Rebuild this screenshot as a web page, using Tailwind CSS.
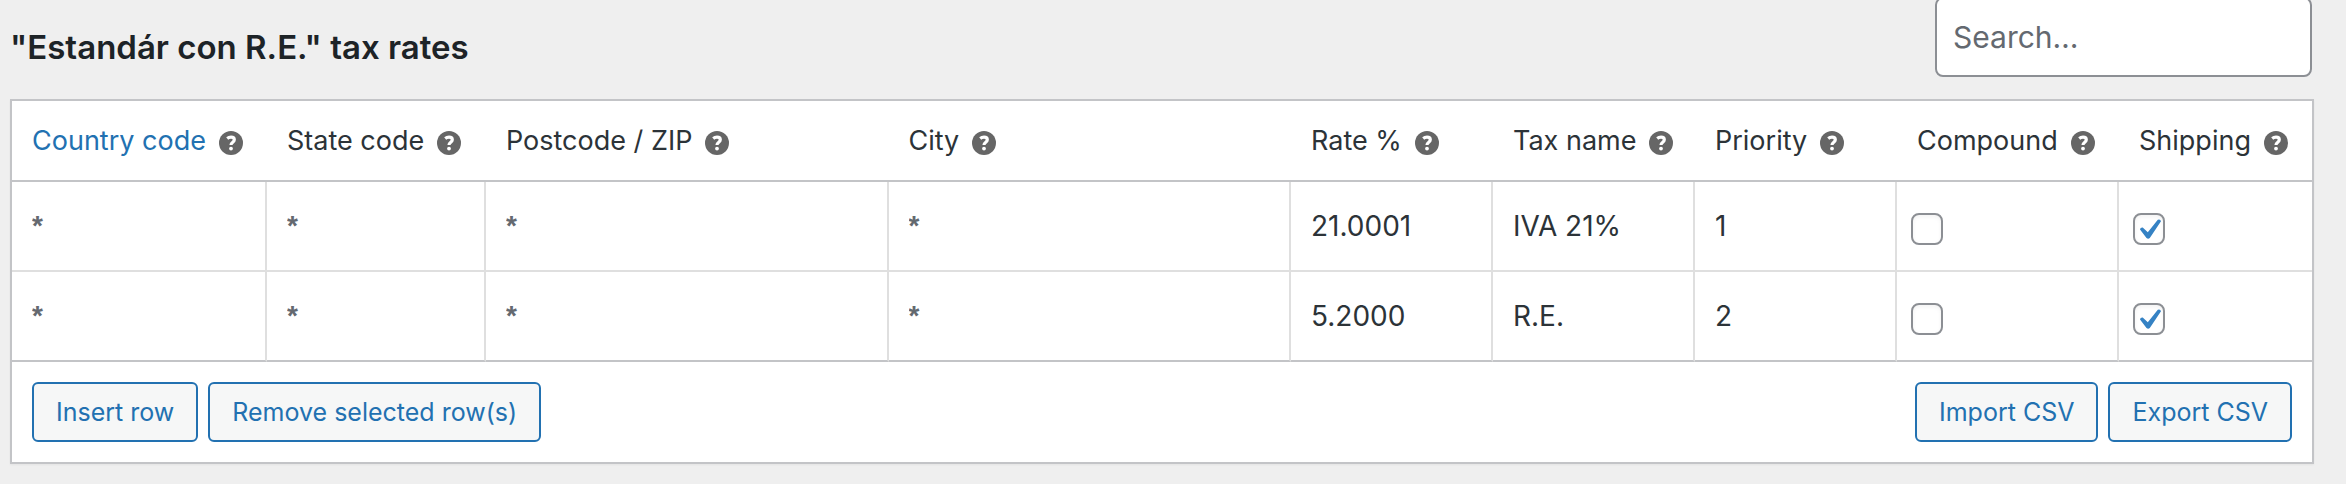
<!DOCTYPE html>
<html lang="en">
<head>
  <meta charset="utf-8"/>
  <meta content="width=device-width, initial-scale=1" name="viewport"/>
  <title>Tax rates</title>
  <script src="https://cdn.jsdelivr.net/npm/@tailwindcss/browser@4"></script>
</head>
<body class="bg-[#efefef] min-h-screen overflow-x-hidden font-['Inter','Liberation_Sans',sans-serif] text-[28px] text-[#2c3338]">
  <!-- shared icons -->
  <svg class="hidden" aria-hidden="true">
    <symbol id="help" viewBox="0 0 24 24">
      <circle cx="12" cy="12" r="12" fill="#666"/>
      <path d="M8.200 7.500C9.300 6.600 10.600 6.200 12 6.200c2.200 0 3.300 1 3.300 2.600 0 2.500-3.300 2.300-3.300 5.200" fill="none" stroke="#fff" stroke-width="3.200"/>
      <circle cx="12" cy="17.600" r="1.900" fill="#fff"/>
    </symbol>
    <symbol id="tick" viewBox="0 0 32 32">
      <path d="M7 16.500Q7.200 14.300 9.700 14.500L14.800 19.300L24.800 6.800Q27.300 5.800 28 8.300L16.800 25Q15.200 26.400 13.500 25Z" fill="#3582c4"/>
    </symbol>
  </svg>

  <main class="pl-[10px] pr-8">
    <header class="flex items-start justify-between h-[99px]">
      <h1 class="pt-[27px] text-[33px] leading-10 font-semibold text-[#1d2327]">"Estandár con R.E." tax rates</h1>
      <input type="search" aria-label="Search" placeholder="Search…" class="-mt-[3px] mr-[2px] w-[377px] h-20 px-4 rounded-lg border-2 border-[#8c8f94] bg-white text-[30px] placeholder:text-[#646970] placeholder:opacity-100"/>
    </header>

    <div class="bg-white border-2 border-[#c3c4c7] shadow-xs">
      <table class="w-full table-fixed border-separate border-spacing-0 text-left">
        <colgroup>
          <col class="w-[255px]"/>
          <col class="w-[219px]"/>
          <col/>
          <col/>
          <col class="w-[202px]"/>
          <col class="w-[202px]"/>
          <col class="w-[202px]"/>
          <col class="w-[222px]"/>
          <col class="w-[193px]"/>
        </colgroup>
        <thead>
          <tr class="h-[81px] text-[27px] *:border-b-2 *:border-[#c3c4c7] *:pl-5 *:pt-[2px] *:font-normal *:whitespace-nowrap">
            <th><div class="flex items-center gap-[13px]"><a href="#" class="text-[#2271b1]">Country code</a><svg class="size-6 mt-[3px]"><use href="#help"/></svg></div></th>
            <th><div class="flex items-center gap-[13px]">State code<svg class="size-6 mt-[3px]"><use href="#help"/></svg></div></th>
            <th><div class="flex items-center gap-[13px]">Postcode / ZIP<svg class="size-6 mt-[3px]"><use href="#help"/></svg></div></th>
            <th><div class="flex items-center gap-[13px]">City<svg class="size-6 mt-[3px]"><use href="#help"/></svg></div></th>
            <th><div class="flex items-center gap-[13px]">Rate %<svg class="size-6 mt-[3px]"><use href="#help"/></svg></div></th>
            <th><div class="flex items-center gap-[13px]">Tax name<svg class="size-6 mt-[3px]"><use href="#help"/></svg></div></th>
            <th><div class="flex items-center gap-[13px]">Priority<svg class="size-6 mt-[3px]"><use href="#help"/></svg></div></th>
            <th><div class="flex items-center gap-[13px]">Compound<svg class="size-6 mt-[3px]"><use href="#help"/></svg></div></th>
            <th><div class="flex items-center gap-[13px]">Shipping<svg class="size-6 mt-[3px]"><use href="#help"/></svg></div></th>
          </tr>
        </thead>
        <tbody>
          <tr class="h-[90px] *:border-b-2 *:border-r-2 *:border-[#dfdfdf] *:last:border-r-0">
            <td><input type="text" aria-label="Country code" placeholder="*" class="block w-full h-[88px] px-5 font-['Liberation_Sans',sans-serif] font-bold placeholder:text-[#646970]"/></td>
            <td><input type="text" aria-label="State code" placeholder="*" class="block w-full h-[88px] px-5 font-['Liberation_Sans',sans-serif] font-bold placeholder:text-[#646970]"/></td>
            <td><input type="text" aria-label="Postcode / ZIP" placeholder="*" class="block w-full h-[88px] px-5 font-['Liberation_Sans',sans-serif] font-bold placeholder:text-[#646970]"/></td>
            <td><input type="text" aria-label="City" placeholder="*" class="block w-full h-[88px] px-5 font-['Liberation_Sans',sans-serif] font-bold placeholder:text-[#646970]"/></td>
            <td><input type="text" aria-label="Rate %" value="21.0001" class="block w-full h-[88px] px-5"/></td>
            <td><input type="text" aria-label="Tax name" value="IVA 21%" class="block w-full h-[88px] px-5"/></td>
            <td><input type="text" aria-label="Priority" value="1" class="block w-full h-[88px] px-5"/></td>
            <td class="pl-[14px] pt-[6px]"><input type="checkbox" aria-label="Compound" class="block appearance-none size-8 rounded-lg border-2 border-[#8c8f94] bg-white inset-shadow-sm"/></td>
            <td class="pl-[14px] pt-[6px]"><div class="grid size-8"><input type="checkbox" checked aria-label="Shipping" class="col-start-1 row-start-1 appearance-none size-8 rounded-lg border-2 border-[#8c8f94] bg-white inset-shadow-sm"/><svg class="col-start-1 row-start-1 size-8 pointer-events-none"><use href="#tick"/></svg></div></td>
          </tr>
          <tr class="h-[90px] *:border-b-2 *:border-b-[#c3c4c7] *:border-r-2 *:border-r-[#dfdfdf] *:last:border-r-0">
            <td><input type="text" aria-label="Country code" placeholder="*" class="block w-full h-[88px] px-5 font-['Liberation_Sans',sans-serif] font-bold placeholder:text-[#646970]"/></td>
            <td><input type="text" aria-label="State code" placeholder="*" class="block w-full h-[88px] px-5 font-['Liberation_Sans',sans-serif] font-bold placeholder:text-[#646970]"/></td>
            <td><input type="text" aria-label="Postcode / ZIP" placeholder="*" class="block w-full h-[88px] px-5 font-['Liberation_Sans',sans-serif] font-bold placeholder:text-[#646970]"/></td>
            <td><input type="text" aria-label="City" placeholder="*" class="block w-full h-[88px] px-5 font-['Liberation_Sans',sans-serif] font-bold placeholder:text-[#646970]"/></td>
            <td><input type="text" aria-label="Rate %" value="5.2000" class="block w-full h-[88px] px-5"/></td>
            <td><input type="text" aria-label="Tax name" value="R.E." class="block w-full h-[88px] px-5"/></td>
            <td><input type="text" aria-label="Priority" value="2" class="block w-full h-[88px] px-5"/></td>
            <td class="pl-[14px] pt-[6px]"><input type="checkbox" aria-label="Compound" class="block appearance-none size-8 rounded-lg border-2 border-[#8c8f94] bg-white inset-shadow-sm"/></td>
            <td class="pl-[14px] pt-[6px]"><div class="grid size-8"><input type="checkbox" checked aria-label="Shipping" class="col-start-1 row-start-1 appearance-none size-8 rounded-lg border-2 border-[#8c8f94] bg-white inset-shadow-sm"/><svg class="col-start-1 row-start-1 size-8 pointer-events-none"><use href="#tick"/></svg></div></td>
          </tr>
        </tbody>
      </table>
      <div class="flex gap-[10px] p-5 text-[25px] text-[#2271b1]">
        <button type="button" class="h-[60px] px-[22px] pt-[2px] rounded-md border-2 border-[#2271b1] bg-[#f6f7f7]">Insert row</button>
        <button type="button" class="h-[60px] px-[22px] pt-[2px] rounded-md border-2 border-[#2271b1] bg-[#f6f7f7]">Remove selected row(s)</button>
        <button type="button" class="h-[60px] px-[22px] pt-[2px] ml-auto rounded-md border-2 border-[#2271b1] bg-[#f6f7f7]">Import CSV</button>
        <button type="button" class="h-[60px] px-[22px] pt-[2px] rounded-md border-2 border-[#2271b1] bg-[#f6f7f7]">Export CSV</button>
      </div>
    </div>
  </main>
</body>
</html>
